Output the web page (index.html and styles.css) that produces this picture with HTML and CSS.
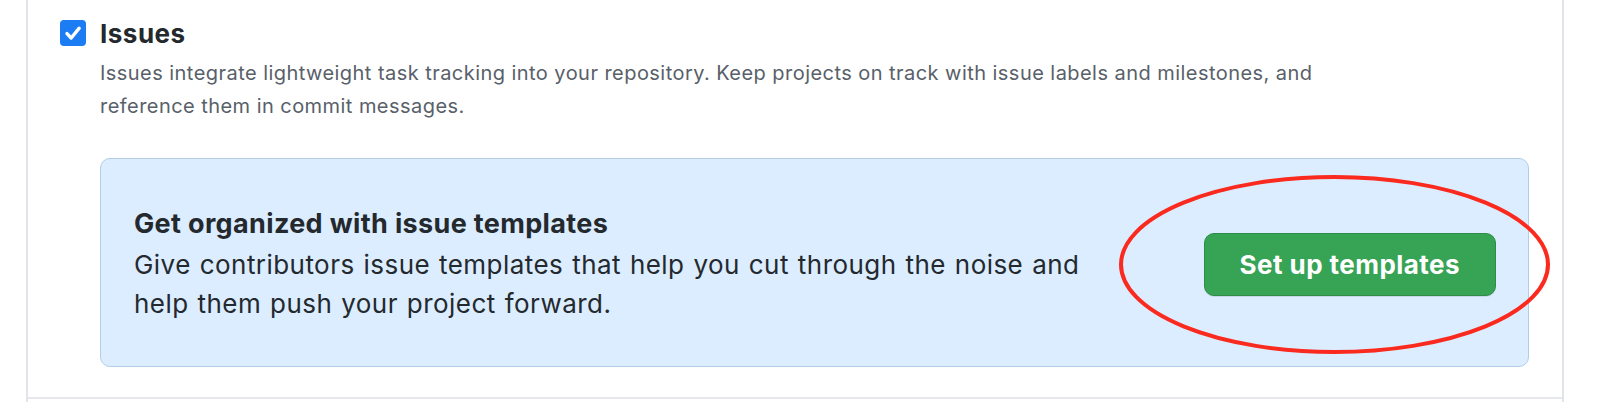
FILE: index.html
```html
<!DOCTYPE html>
<html lang="en">
<head>
<meta charset="utf-8">
<title>Issues setting</title>
<link rel="stylesheet" href="styles.css">
</head>
<body>
<div class="settings-box">
  <div class="settings-item">
    <div class="feature">
      <span class="check" role="checkbox" aria-checked="true">
        <svg viewBox="0 0 26 26" width="26" height="26"><path d="M7 13.6 L11.2 18 L19.2 8.2" fill="none" stroke="#fff" stroke-width="3.4" stroke-linecap="round" stroke-linejoin="round"/></svg>
      </span>
      <div class="feature-body">
        <div class="feature-title">Issues</div>
        <p class="note">Issues integrate lightweight task tracking into your repository. Keep projects on track with issue labels and milestones, and reference them in commit messages.</p>
        <div class="flash">
          <div class="flash-text">
            <div class="flash-title">Get organized with issue templates</div>
            <p class="flash-desc">Give contributors issue templates that help you cut through the noise and help them push your project forward.</p>
          </div>
          <button class="btn-primary" type="button">Set up templates</button>
          <svg class="annotation" viewBox="0 0 433 181" width="433" height="181" aria-hidden="true"><ellipse cx="216.5" cy="90.5" rx="213.5" ry="87.5" fill="none" stroke="#fb2a1e" stroke-width="4"/></svg>
        </div>
      </div>
    </div>
  </div>
</div>
</body>
</html>
```
FILE: styles.css
```css
html, body {
  margin: 0;
  padding: 0;
  background: #ffffff;
}

body {
  font-family: Inter, "Noto Sans", "Liberation Sans", sans-serif;
  color: #24292e;
  height: 402px;
  overflow: hidden;
}

.settings-box {
  box-sizing: border-box;
  width: 1538px;
  margin-left: 26px;
  border-left: 2px solid #e1e4e8;
  border-right: 2px solid #e1e4e8;
  height: 402px;
}

.settings-item {
  box-sizing: border-box;
  height: 399px;
  padding: 19px 33px 0 32px;
  border-bottom: 2px solid #e6e8ee;
}

.feature {
  display: flex;
  gap: 14px;
}

.check {
  flex: none;
  width: 26px;
  height: 26px;
  margin-top: 1px;
  border-radius: 4px;
  background: #1b7cf4;
  display: flex;
  align-items: center;
  justify-content: center;
}

.check svg {
  display: block;
}

.feature-body {
  flex: 1;
  min-width: 0;
}

.feature-title {
  font-size: 26px;
  line-height: 30px;
  font-weight: 700;
  letter-spacing: 0.5px;
  color: #24292e;
}

.note {
  margin: 8px 0 0;
  max-width: 1240px;
  font-size: 20px;
  line-height: 33px;
  letter-spacing: 0.45px;
  color: #586069;
}

.flash {
  position: relative;
  margin-top: 35px;
  box-sizing: border-box;
  height: 209px;
  display: flex;
  align-items: center;
  justify-content: space-between;
  padding: 0 32px 0 33px;
  background: #dbedff;
  border: 1px solid #b3cde9;
  border-radius: 10px;
}

.flash-text {
  max-width: 960px;
}

.flash-title {
  font-size: 27px;
  line-height: 42px;
  font-weight: 700;
  letter-spacing: 0.35px;
  color: #24292e;
}

.flash-desc {
  margin: 0;
  font-size: 26px;
  line-height: 39px;
  letter-spacing: 0.45px;
  word-spacing: 1.2px;
  color: #24292e;
}

.btn-primary {
  flex: none;
  height: 63px;
  margin-top: 3px;
  padding: 0 35px;
  font-family: inherit;
  font-size: 26px;
  font-weight: 700;
  letter-spacing: 0.45px;
  color: #ffffff;
  background: #37a354;
  border: 1px solid #2f8c48;
  border-radius: 10px;
  box-shadow: 0 1px 0 rgba(27, 31, 35, 0.1);
}

.annotation {
  position: absolute;
  left: 1017px;
  top: 15px;
  overflow: visible;
  pointer-events: none;
}
```
